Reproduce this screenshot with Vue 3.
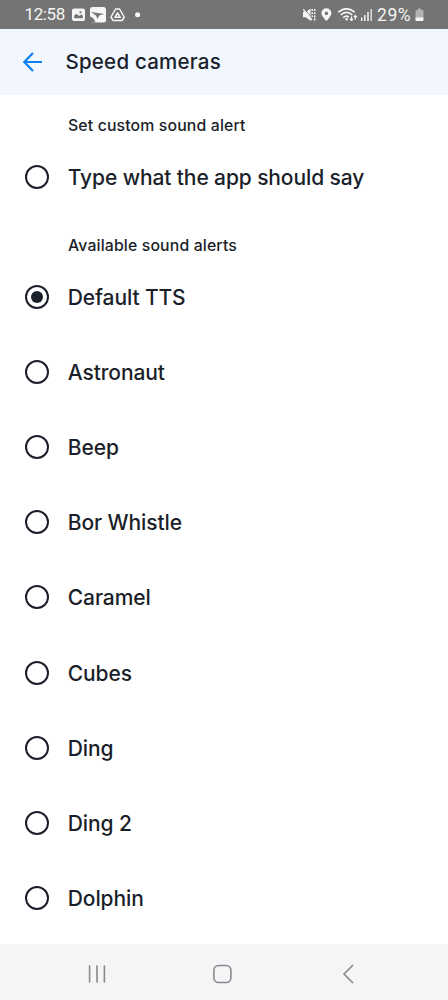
<script setup>
import { ref } from 'vue'

const custom = 'Type what the app should say'
const sounds = ['Default TTS', 'Astronaut', 'Beep', 'Bor Whistle', 'Caramel', 'Cubes', 'Ding', 'Ding 2', 'Dolphin']
const selected = ref('Default TTS')
</script>

<template>
  <div class="screen">
    <div class="status">
      <span class="clock">12:58</span>
      <svg class="left-icons" width="76" height="29" viewBox="0 0 76 29">
        <path fill="#f6f6f6" fill-rule="evenodd" d="M4 8.500h9q2 0 2 2v8.500q0 2-2 2H4q-2 0-2-2v-8.500q0-2 2-2zM4.200 18.300h8.600v-2.800l-1.700-1-2 1.500-2.600-2.300-2.300 1.800zM9.500 11.300h2v2h-2z" />
        <path fill="#f6f6f6" d="M22.500 7h11q2.500 0 2.500 2.500V20q0 2.500-2.500 2.500h-11q-2.500 0-2.500-2.500V9.500Q20 7 22.500 7z" />
        <path fill="#747474" d="M21 12l13.500 2-5 1.300-2.200 3.700-1-3.200zM20 16.500q4 1 5.500 6H20z" />
        <path fill="none" stroke="#f6f6f6" stroke-width="1.500" stroke-linejoin="round" d="M45.600 9h4l4.600 8-2.100 3.500h-9l-2.100-3.500zM47.600 13l2.700 4.300h-5.400z" />
        <circle cx="67.600" cy="14.800" r="2.500" fill="#f6f6f6" />
      </svg>
      <svg class="right-icons" width="74" height="29" viewBox="0 0 74 29">
        <path fill="#f6f6f6" d="M1 12h3l4.500-3.500v12.500L4 17.300H1z" />
        <path fill="none" stroke="#747474" stroke-width="1" d="M2.300 8.800l8.400 10" />
        <path fill="none" stroke="#f6f6f6" stroke-width="1.300" d="M1.300 9.500L10 20" />
        <path fill="none" stroke="#f6f6f6" stroke-width="1.500" stroke-dasharray="2 1.200" d="M10.200 9v8M12.700 9v12" />
        <path fill="#f6f6f6" fill-rule="evenodd" d="M24.400 8.300a5 5 0 0 1 5 5q0 2.700-5 7.700-5-5-5-7.700a5 5 0 0 1 5-5zm0 3.300a1.700 1.700 0 1 0 .01 0z" />
        <g fill="none" stroke="#f6f6f6" stroke-width="1.700">
          <path d="M36.300 12.200q8.200-6.900 16.400 0M38.700 14.900q5.800-5 11.600 0M41.200 17.600q3-2.500 5.700-.5" />
          <path stroke-width="1.200" d="M49.500 16.500v4m-1.500-1.500l1.500 1.500 1.500-1.500M53.300 19.500v-4m-1.500 1.500l1.500-1.500 1.500 1.500" />
        </g>
        <path fill="#f6f6f6" d="M43 19l1.700-1.300 1.500 1.300-1.500 2z" />
        <path stroke="#f6f6f6" stroke-width="1.500" d="M59.700 17.500V21M62.800 15v6M66 12v9" />
        <path stroke="#dedede" stroke-width="1.500" d="M69.200 9v12" />
      </svg>
      <span class="percent">29%</span>
      <svg class="battery" width="12" height="29" viewBox="0 0 12 29">
        <path fill="#b3b3b3" d="M3 8.500h3V10h1.500q1 0 1 1v7H.5v-7q0-1 1-1H3z" />
        <path fill="#f8f8f8" d="M.5 17.500h8V20q0 1-1 1h-6q-1 0-1-1z" />
      </svg>
    </div>

    <header class="header">
      <svg class="back" width="22" height="22" viewBox="0 0 22 22">
        <path d="M20 11H3M11 2L2.300 11l8.700 9" />
      </svg>
      <h1>Speed cameras</h1>
    </header>

    <main class="content">
      <h2>Set custom sound alert</h2>
      <div class="row wide" @click="selected = custom">
        <i class="radio" :class="{ on: selected === custom }"></i>
        <span>{{ custom }}</span>
      </div>
      <h2 class="second">Available sound alerts</h2>
      <div v-for="s in sounds" :key="s" class="row" @click="selected = s">
        <i class="radio" :class="{ on: selected === s }"></i>
        <span>{{ s }}</span>
      </div>
    </main>

    <nav class="nav">
      <svg width="448" height="56" viewBox="0 0 448 56">
        <g fill="none" stroke="#89898b" stroke-width="1.600">
          <path stroke-linecap="round" d="M89.600 22v16M97 22v16M104.400 22v16" />
          <rect x="213.900" y="21.500" width="17" height="17" rx="4.800" />
          <path d="M353 21l-9 9 9 9" />
        </g>
      </svg>
    </nav>
  </div>
</template>

<style scoped>
.screen {
  width: 448px;
  height: 1000px;
  display: flex;
  flex-direction: column;
  overflow: hidden;
  background: #fff;
  color: #1b1f2a;
  font-family: Inter, "Liberation Sans", sans-serif;
}
.status {
  height: 29px;
  flex: none;
  display: flex;
  align-items: center;
  background: #747474;
  color: #f6f6f6;
  font-family: Roboto, sans-serif;
  font-size: 17px;
}
.clock {
  width: 45.500px;
  margin-left: 24.500px;
  line-height: 29px;
  letter-spacing: -0.4px;
}
.left-icons { flex: none; }
.right-icons { flex: none; margin-left: 156px; }
.percent {
  width: 36px;
  margin-left: 1px;
  line-height: 30px;
  font-size: 17.500px;
  letter-spacing: 0.6px;
}
.battery { margin-left: 1.500px; flex: none; }
.header {
  height: 65.500px;
  flex: none;
  display: flex;
  align-items: center;
  background: #f1f6ff;
}
.back {
  margin-left: 22px;
  fill: none;
  stroke: #0c7ff2;
  stroke-width: 2.200;
}
h1 {
  margin: 0 0 0 21.500px;
  font-size: 20.500px;
  font-weight: 500;
  letter-spacing: 0.22px;
  white-space: nowrap;
}
.content {
  flex: 1;
  min-height: 0;
  padding-top: 21px;
}
h2 {
  height: 20px;
  margin: 0 0 0 68px;
  font-size: 15.800px;
  line-height: 20px;
  font-weight: 450;
  letter-spacing: 0.15px;
  white-space: nowrap;
}
.second { margin-top: 20.500px; }
.row {
  height: 75.150px;
  display: flex;
  align-items: center;
  font-size: 21px;
  font-weight: 500;
  letter-spacing: -0.11px;
  white-space: nowrap;
}
.row span { padding-top: 1px; }
.wide { height: 83px; margin-bottom: -3.500px; }
.second + .row { margin-top: 3.800px; }
.radio {
  box-sizing: border-box;
  width: 24px;
  height: 24px;
  flex: none;
  display: grid;
  place-items: center;
  margin: 0 18.500px 0 25.300px;
  border: 2.200px solid #1b1f2a;
  border-radius: 50%;
}
.radio.on::after {
  content: "";
  width: 12px;
  height: 12px;
  border-radius: 50%;
  background: #1b1f2a;
}
.nav {
  height: 56px;
  flex: none;
  background: #f5f5f8;
}
.nav svg { display: block; }
</style>

<style>
body { margin: 0; background: #fff; }
</style>
